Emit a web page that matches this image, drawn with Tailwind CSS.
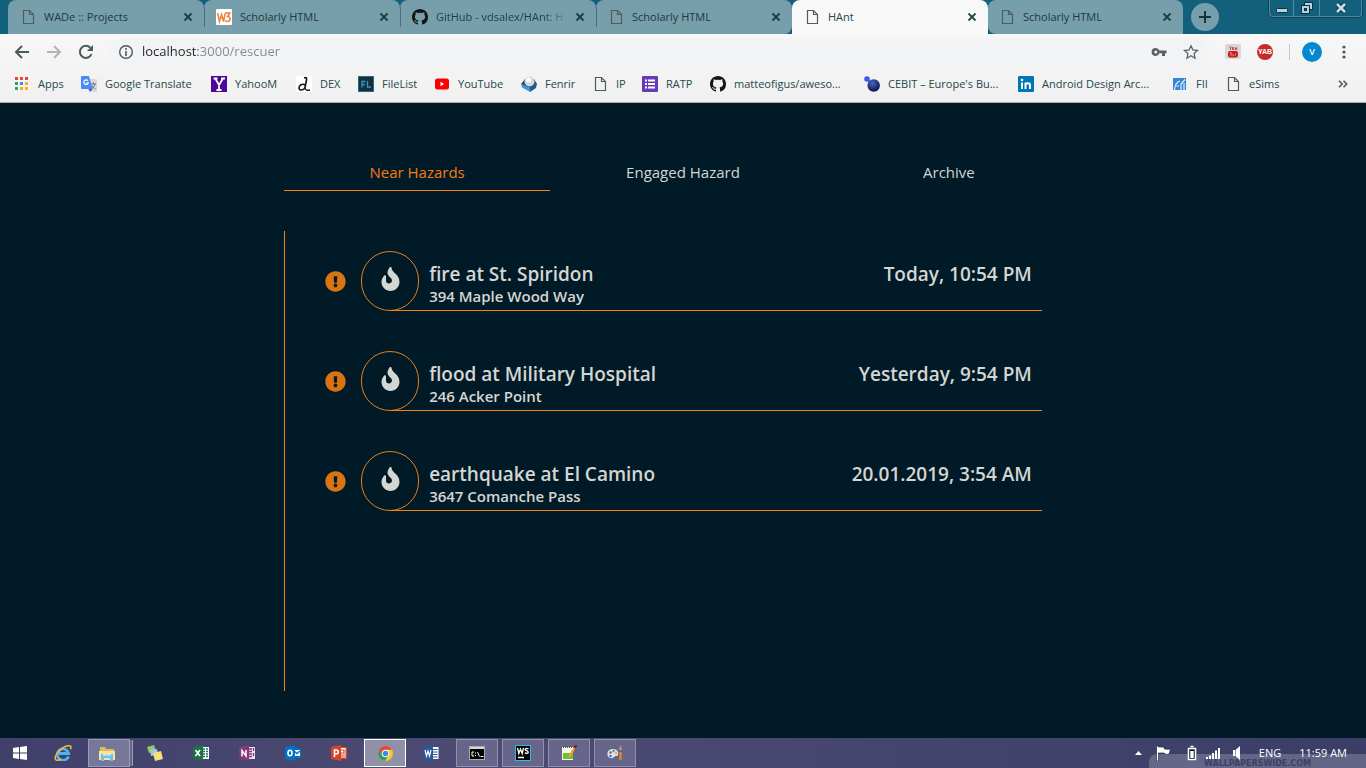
<!DOCTYPE html>
<html lang="en">
<head>
<meta charset="utf-8">
<meta name="viewport" content="width=device-width, initial-scale=1">
<title>HAnt</title>
<script src="https://cdn.jsdelivr.net/npm/@tailwindcss/browser@4"></script>
</head>
<body class="bg-[#011a27]">
<svg class="hidden" aria-hidden="true">
  <symbol id="doc" viewBox="0 0 16 16"><path d="M3.5 1.5h6l4 4v9h-10z M9.5 1.500v4h4" fill="none" stroke="currentColor" stroke-width="1.2"/></symbol>
  <symbol id="close" viewBox="0 0 16 16"><path d="M4.500 4.500l7 7M11.500 4.500l-7 7" stroke="currentColor" stroke-width="1.8" fill="none"/></symbol>
  <symbol id="github" viewBox="0 0 16 16"><path fill="#141414" d="M8 0C3.58 0 0 3.58 0 8c0 3.54 2.29 6.53 5.47 7.59.4.07.55-.17.55-.38 0-.19-.01-.82-.01-1.49-2.01.37-2.53-.49-2.69-.94-.09-.23-.48-.94-.82-1.13-.28-.15-.68-.52-.01-.53.63-.01 1.08.58 1.23.82.72 1.21 1.87.87 2.33.66.07-.52.28-.87.51-1.07-1.78-.2-3.64-.89-3.64-3.95 0-.87.31-1.59.82-2.15-.08-.2-.36-1.02.08-2.12 0 0 .67-.21 2.2.82.64-.18 1.32-.27 2-.27.68 0 1.36.09 2 .27 1.53-1.04 2.2-.82 2.2-.82.44 1.1.16 1.92.08 2.12.51.56.82 1.27.82 2.15 0 3.07-1.87 3.75-3.65 3.95.29.25.54.73.54 1.48 0 1.07-.01 1.930-.01 2.2 0 .21.15.46.55.38A8.013 8.013 0 0016 8c0-4.42-3.58-8-8-8z"/></symbol>
  <symbol id="fire" viewBox="0 0 384 512"><path fill="currentColor" d="M216 23.858c0-23.802-30.653-32.765-44.149-13.038C48 191.851 224 200 224 288c0 35.629-29.114 64.458-64.850 63.994C123.980 351.538 96 322.220 96 287.046v-85.510c0-21.703-26.471-32.225-41.432-16.504C27.801 213.158 0 261.332 0 320c0 105.869 86.131 192 192 192s192-86.131 192-192c0-170.290-168-193.003-168-296.142z"/></symbol>
  <symbol id="alert" viewBox="0 0 512 512"><path fill="currentColor" d="M504 256c0 136.997-111.043 248-248 248S8 392.997 8 256C8 119.083 119.043 8 256 8s248 111.083 248 248zm-248 50c-25.405 0-46 20.595-46 46s20.595 46 46 46 46-20.595 46-46-20.595-46-46-46zm-43.673-165.346l7.418 136c.347 6.364 5.609 11.346 11.982 11.346h48.546c6.373 0 11.635-4.982 11.982-11.346l7.418-136c.375-6.874-5.098-12.654-11.982-12.654h-63.383c-6.884 0-12.356 5.780-11.981 12.654z"/></symbol>
</svg>

<div class="flex min-h-screen flex-col font-['Open_Sans','Noto_Sans',sans-serif]">

  <!-- Browser tab strip -->
  <header class="flex h-[34px] items-stretch bg-[#12607c] pl-2 text-[11px] text-[#1f3a40]">
    <div class="flex w-[196px] items-center rounded-t-lg bg-[#779eab] pr-2 pl-3">
      <button class="flex flex-1 items-center gap-2 whitespace-nowrap"><svg class="size-4 text-[#4f5b5e]"><use href="#doc"/></svg>WADe :: Projects</button>
      <button aria-label="Close tab"><svg class="size-4"><use href="#close"/></svg></button>
    </div>
    <div class="flex w-[196px] items-center rounded-t-lg bg-[#779eab] pr-2">
      <span class="mr-[11px] h-5 w-px bg-[#4a707c]"></span>
      <button class="flex flex-1 items-center gap-2 whitespace-nowrap">
        <svg class="size-4" viewBox="0 0 16 16"><rect width="16" height="16" rx="1" fill="#fff"/><path d="M1.500 4l2 8.500 2-7 2 7L9.300 4M9.500 4h4.500l-2.500 3.500c3.500.2 3.500 5-.2 5-1 0-1.600-.4-2-1" fill="none" stroke="#f0803c" stroke-width="1.500"/></svg>Scholarly HTML</button>
      <button aria-label="Close tab"><svg class="size-4"><use href="#close"/></svg></button>
    </div>
    <div class="flex w-[196px] items-center rounded-t-lg bg-[#779eab] pr-2">
      <span class="mr-[11px] h-5 w-px bg-[#4a707c]"></span>
      <button class="flex min-w-0 flex-1 items-center gap-2"><svg class="size-4 shrink-0"><use href="#github"/></svg><span class="w-[133px] overflow-hidden mask-r-from-80% text-left whitespace-nowrap">GitHub - vdsalex/HAnt: H</span></button>
      <button aria-label="Close tab"><svg class="size-4"><use href="#close"/></svg></button>
    </div>
    <div class="flex w-[196px] items-center rounded-t-lg rounded-br-lg bg-[#779eab] pr-2">
      <span class="mr-[11px] h-5 w-px bg-[#4a707c]"></span>
      <button class="flex flex-1 items-center gap-2 whitespace-nowrap"><svg class="size-4 text-[#4f5b5e]"><use href="#doc"/></svg>Scholarly HTML</button>
      <button aria-label="Close tab"><svg class="size-4"><use href="#close"/></svg></button>
    </div>
    <div class="flex w-[196px] items-center rounded-t-lg bg-[#f8f8f9] pr-2 pl-3 text-[#24484c]">
      <button class="flex flex-1 items-center gap-2 whitespace-nowrap"><svg class="size-4 text-[#4f5b5e]"><use href="#doc"/></svg>HAnt</button>
      <button aria-label="Close tab"><svg class="size-4"><use href="#close"/></svg></button>
    </div>
    <div class="flex w-[195px] items-center rounded-t-lg rounded-bl-lg bg-[#779eab] pr-2 pl-[11px]">
      <button class="flex flex-1 items-center gap-2 whitespace-nowrap"><svg class="size-4 text-[#4f5b5e]"><use href="#doc"/></svg>Scholarly HTML</button>
      <button aria-label="Close tab"><svg class="size-4"><use href="#close"/></svg></button>
    </div>
    <button aria-label="New tab" class="ml-2 flex size-7 items-center justify-center self-center rounded-full bg-[#779eab]">
      <svg class="size-4" viewBox="0 0 16 16"><path d="M8 2v12M2 8h12" stroke="#16323a" stroke-width="2"/></svg>
    </button>
    <div class="mr-1 ml-auto flex h-[17px] divide-x divide-[#4f8ba0] rounded-b border border-t-0 border-[#4f8ba0] shadow-[0_0_0_1px_#0b4259]">
      <button aria-label="Minimize" class="flex w-6 items-center justify-center"><svg class="h-[14px] w-4" viewBox="0 0 16 14"><rect x="2.500" y="7.500" width="11" height="4" rx="1" fill="#b9d1d9" stroke="#0a3443"/></svg></button>
      <button aria-label="Restore" class="flex w-[26px] items-center justify-center"><svg class="size-[14px]" viewBox="0 0 14 14"><rect x="4.500" y="1.500" width="8" height="7" fill="#b9d1d9" stroke="#0a3443"/><rect x="1.500" y="4.500" width="8" height="8" fill="#b9d1d9" stroke="#0a3443"/><rect x="4.500" y="7.500" width="2" height="2" fill="#12607c" stroke="#0a3443"/></svg></button>
      <button aria-label="Close" class="flex w-[41px] items-center justify-center"><svg class="h-3 w-[14px]" viewBox="0 0 14 12"><path d="M3 2l8 8M11 2l-8 8" stroke="#0a3443" stroke-width="4.500"/><path d="M3 2l8 8M11 2l-8 8" stroke="#c9dde4" stroke-width="2.500"/></svg></button>
    </div>
  </header>

  <!-- Toolbar -->
  <div class="bg-linear-to-b from-[#f7f7f7] to-[#f0f0f0]">
    <div class="flex h-9 items-center text-[#4c5b5a]">
      <div class="flex items-center gap-4 pl-3.5">
        <button aria-label="Back"><svg class="size-4" viewBox="0 0 16 16"><path d="M15 8H2.500M8 2L2 8l6 6" fill="none" stroke="currentColor" stroke-width="2"/></svg></button>
        <button aria-label="Forward"><svg class="size-4 text-[#b1b5b5]" viewBox="0 0 16 16"><path d="M1 8h12.500M8 2l6 6-6 6" fill="none" stroke="currentColor" stroke-width="2"/></svg></button>
        <button aria-label="Reload"><svg class="size-4" viewBox="0 0 16 16"><path d="M13.500 10A6 6 0 1 1 12.300 3.800" fill="none" stroke="currentColor" stroke-width="2"/><path d="M15 1v6H9z" fill="currentColor"/></svg></button>
      </div>
      <div class="ml-4 flex h-7 flex-1 items-center rounded-full bg-[#f1f3f5] pr-2.5 pl-2">
        <svg class="size-4" viewBox="0 0 16 16"><circle cx="8" cy="8" r="6.300" fill="none" stroke="currentColor" stroke-width="1.400"/><path d="M8 7v5M8 4v1.700" stroke="currentColor" stroke-width="1.600"/></svg>
        <input aria-label="Address" value="localhost:3000/rescuer" class="ml-2 min-w-0 flex-1 bg-[linear-gradient(90deg,#222_56px,#82888c_56px)] bg-clip-text text-[13px] text-transparent outline-none">
        <button aria-label="Saved passwords" class="mr-4"><svg class="size-4" viewBox="0 0 16 16"><path fill-rule="evenodd" fill="#5d6163" d="M4.800 4a4 4 0 1 0 3.600 5.300H11V12h3V9.300h1.500V6.500H8.400A4 4 0 0 0 4.800 4zm0 2.500a1.500 1.500 0 1 1 0 3 1.500 1.500 0 0 1 0-3z"/></svg></button>
        <button aria-label="Bookmark this page"><svg class="size-4" viewBox="0 0 16 16"><path d="M8 1.800l1.900 4.200 4.600.5-3.400 3.100.9 4.600-4-2.400-4 2.400.9-4.600L1.500 6.500 6.100 6z" fill="none" stroke="#5d6163" stroke-width="1.300"/></svg></button>
      </div>
      <div class="flex items-center pr-3.5 pl-4">
        <button aria-label="YouTube extension"><svg class="size-4" viewBox="0 0 16 16"><rect width="16" height="15" rx="2" fill="#d8d8d8"/><rect x="3" y="7" width="10" height="6.500" rx="2" fill="#c7201f"/><path d="M4.500 2.500l1 1.500 1-1.500M5.500 4v2M7.500 3.500h1.200v2H7.500zM10.500 3.500v2h1.200v-2" stroke="#c7201f" stroke-width=".8" fill="none"/><path d="M5 9h2M6 9v3M8 10v1.500h1M10.500 9.500v2" stroke="#f2b5b0" fill="none" stroke-width=".7"/></svg></button>
        <button aria-label="YAB extension" class="ml-4 size-4 rounded-full bg-[#c92a27] text-center font-['Liberation_Sans',sans-serif] text-[7px] leading-4 font-bold text-white">YAB</button>
        <span class="mr-3 ml-4 h-4 w-px bg-[#c6c8c8]"></span>
        <button aria-label="Profile" class="size-5 rounded-full bg-[#0288d1] text-center text-[9px] leading-5 font-semibold text-white">V</button>
        <button aria-label="Menu" class="ml-[14px]"><svg class="size-4" viewBox="0 0 16 16" fill="#4c5b5a"><circle cx="8" cy="3" r="1.600"/><circle cx="8" cy="8" r="1.600"/><circle cx="8" cy="13" r="1.600"/></svg></button>
      </div>
    </div>

    <!-- Bookmarks -->
    <nav aria-label="Bookmarks" class="flex h-[33px] items-center border-b border-[#a9abab] pr-[15px] pb-1 pl-[14px] text-[11px] whitespace-nowrap text-[#24484c] [&>a]:flex [&>a]:shrink-0 [&>a]:items-center [&>a]:gap-2 [&_svg]:size-4">
      <a href="#" class="w-[67px]"><svg viewBox="0 0 16 16"><path fill="#e8453c" d="M1 1h3v3H1zM6 1h3v3H6zM11 1h3v3h-3z"/><path fill="#35a457" d="M1 6h3v3H1zM1 11h3v3H1z"/><path fill="#4285f4" d="M6 6h3v3H6z"/><path fill="#fbb018" d="M11 6h3v3h-3zM6 11h3v3H6zM11 11h3v3h-3z"/></svg>Apps</a>
      <a href="#" class="w-[130px]"><svg viewBox="0 0 16 16"><path fill="#d5d8dc" d="M6 3h9a1 1 0 0 1 1 1v12h-6z"/><path d="M10 8h5M12.500 6.500V8M14 8c-.5 2-2 4-3.500 5M11 9.500c1 2 2 3 3.500 3.500" stroke="#6a7680" fill="none"/><path fill="#4a8af4" d="M1 0h7l3.500 13H1a1 1 0 0 1-1-1V1a1 1 0 0 1 1-1z"/><path fill="#3454c5" d="M7.500 13h4L9 16z"/><path d="M7 4.800A2.300 2.300 0 1 0 7.300 7H5" fill="none" stroke="#fff" stroke-width="1.200"/></svg>Google Translate</a>
      <a href="#" class="w-[85px]"><svg viewBox="0 0 16 16"><rect width="16" height="16" fill="#4b0797"/><path d="M2.500 2.500h4M10 2.500h4M4.300 2.500L8 9l4-6.500M8 8.500V14M5.500 14h5" stroke="#fff" stroke-width="1.800" fill="none"/></svg>YahooM</a>
      <a href="#" class="w-[62px]"><svg viewBox="0 0 16 16"><rect width="16" height="16" fill="#fff"/><path d="M8 2c2.500-1 3 0 2.500 2L9 11.500c-.4 2.500 2 3 5 2.500M9.300 9C6 7 3 9.500 3 12c0 2.800 4.500 2.600 6-.5" stroke="#111" stroke-width="1.600" fill="none"/></svg>DEX</a>
      <a href="#" class="w-[76px]"><svg viewBox="0 0 16 16"><rect x=".5" y=".5" width="15" height="15" fill="#202c34" stroke="#1b6f91"/><path d="M4 11.500V5.500h3.500M4 8.500h3M9.500 5v6H13" stroke="#1f9fd3" stroke-width="1.300" fill="none"/></svg>FileList</a>
      <a href="#" class="w-[87px]"><svg viewBox="0 0 16 16"><rect x="1" y="2.500" width="14" height="11" rx="2.500" fill="#f00"/><path d="M6.500 5.800v4.400L10.200 8z" fill="#fff"/></svg>YouTube</a>
      <a href="#" class="w-[71px]"><svg viewBox="0 0 16 16"><path d="M0 8l4-5h9l3 5-7 7z" fill="#3b4a5a"/><path d="M0 8l9 3.500V16l-8-4.500z" fill="#3b9bd8"/><path d="M9 11.500L16 7l-1 5-6 4z" fill="#1a5d94"/><circle cx="8.500" cy="5.500" r="5" fill="#d3d8dc"/><circle cx="7.500" cy="4" r="2.500" fill="#fff"/></svg>Fenrir</a>
      <a href="#" class="w-[50px]"><svg class="text-[#4f5b5e]"><use href="#doc"/></svg>IP</a>
      <a href="#" class="w-[68px]"><svg viewBox="0 0 16 16"><rect width="16" height="16" rx="1" fill="#673ab7"/><path d="M3 4.500h2M6 4.500h7M3 8h2M6 8h7M3 11.500h2M6 11.500h7" stroke="#fff" stroke-width="2"/></svg>RATP</a>
      <a href="#" class="w-[154px]"><svg><use href="#github"/></svg>matteofigus/aweso...</a>
      <a href="#" class="w-[154px]"><svg viewBox="0 0 16 16"><defs><radialGradient id="ball" cx=".4" cy=".3" r=".7"><stop offset="0" stop-color="#4b62c4"/><stop offset="1" stop-color="#0a1450"/></radialGradient></defs><circle cx="3" cy="3" r="2.800" fill="#3d5af1"/><path d="M3 3l4 4" stroke="#3d5af1" stroke-width="2"/><circle cx="9.700" cy="9.500" r="6.200" fill="url(#ball)"/></svg>CEBIT – Europe's Bu...</a>
      <a href="#" class="w-[154px]"><svg viewBox="0 0 16 16"><rect width="16" height="16" rx="1" fill="#0077b5"/><path d="M4 6.500V13M7.500 6.500V13M7.500 9.500c0-3 4.500-3 4.500 0V13" stroke="#fff" stroke-width="2" fill="none"/><circle cx="4" cy="4" r="1.300" fill="#fff"/></svg>Android Design Arc...</a>
      <a href="#" class="w-[53px]"><svg viewBox="0 0 16 16"><path fill="#2f86d6" d="M1 2h13v12H1z"/><path d="M2.500 14C3 9 4 6 8 5M4.500 10H7M9 14V8l4-4.500M12 14V7" stroke="#eaf3fb" stroke-width="1.200" fill="none"/></svg>FII</a>
      <a href="#"><svg class="text-[#4f5b5e]"><use href="#doc"/></svg>eSims</a>
      <button aria-label="More bookmarks" class="ml-auto"><svg viewBox="0 0 16 16"><path d="M4 4.800L7.200 8 4 11.200M8.500 4.800L11.700 8l-3.200 3.200" fill="none" stroke="#4c5b5a" stroke-width="1.600"/></svg></button>
    </nav>
  </div>

  <!-- Rescuer page -->
  <main class="flex-1 pt-[52px] text-[#d4d6d2]">
    <div class="mx-auto w-[58.4%]">
      <div role="tablist" class="grid grid-cols-3 text-[15px] leading-5">
        <button role="tab" aria-selected="true" class="border-b border-[#f78410] pt-[7px] pb-2 text-[#f57c10]">Near Hazards</button>
        <button role="tab" aria-selected="false" class="border-b border-transparent pt-[7px] pb-2">Engaged Hazard</button>
        <button role="tab" aria-selected="false" class="border-b border-transparent pt-[7px] pb-2">Archive</button>
      </div>
      <ul class="mt-10 flex min-h-[460px] flex-col gap-10 border-l border-l-[#f78410] px-10 pt-5 font-semibold">
        <li class="flex h-[60px] items-center">
          <svg class="size-[21px] text-[#da7412]"><use href="#alert"/></svg>
          <span class="ml-[15px] flex h-[60px] w-[58px] items-center justify-center rounded-full border border-[#e97f18] pb-1"><svg class="h-6 w-[19px]"><use href="#fire"/></svg></span>
          <div class="-ml-[29px] flex h-full flex-1 justify-between border-b border-[#f78410] pt-[11px] pr-[10px] pl-[39px]">
            <div><h2 class="text-[19px] leading-6">fire at St. Spiridon</h2><p class="text-[15px] leading-5">394 Maple Wood Way</p></div>
            <time class="text-[19px] leading-6">Today, 10:54 PM</time>
          </div>
        </li>
        <li class="flex h-[60px] items-center">
          <svg class="size-[21px] text-[#da7412]"><use href="#alert"/></svg>
          <span class="ml-[15px] flex h-[60px] w-[58px] items-center justify-center rounded-full border border-[#e97f18] pb-1"><svg class="h-6 w-[19px]"><use href="#fire"/></svg></span>
          <div class="-ml-[29px] flex h-full flex-1 justify-between border-b border-[#f78410] pt-[11px] pr-[10px] pl-[39px]">
            <div><h2 class="text-[19px] leading-6">flood at Military Hospital</h2><p class="text-[15px] leading-5">246 Acker Point</p></div>
            <time class="text-[19px] leading-6">Yesterday, 9:54 PM</time>
          </div>
        </li>
        <li class="flex h-[60px] items-center">
          <svg class="size-[21px] text-[#da7412]"><use href="#alert"/></svg>
          <span class="ml-[15px] flex h-[60px] w-[58px] items-center justify-center rounded-full border border-[#e97f18] pb-1"><svg class="h-6 w-[19px]"><use href="#fire"/></svg></span>
          <div class="-ml-[29px] flex h-full flex-1 justify-between border-b border-[#f78410] pt-[11px] pr-[10px] pl-[39px]">
            <div><h2 class="text-[19px] leading-6">earthquake at El Camino</h2><p class="text-[15px] leading-5">3647 Comanche Pass</p></div>
            <time class="text-[19px] leading-6">20.01.2019, 3:54 AM</time>
          </div>
        </li>
      </ul>
    </div>
  </main>

  <!-- Taskbar -->
  <footer class="relative flex h-[30px] items-stretch bg-linear-to-r from-[#40406a] via-[#4d4b74] via-35% to-[#3a3e66] py-px text-[11px] leading-3 text-white [&>button]:mx-0.5 [&>button]:flex [&>button]:w-[42px] [&>button]:items-center [&>button]:justify-center [&>button:first-child]:w-9">
    <button aria-label="Start"><svg class="h-[14px] w-[14px]" viewBox="0 0 14 14"><path fill="#fff" d="M0 2l6-1v5.500H0zM7 1l7-1v6.500H7zM0 7.500h6V13l-6-1zM7 7.500h7V14l-7-1z"/></svg></button>
    <button aria-label="Internet Explorer"><svg class="h-4 w-[18px]" viewBox="0 0 18 16"><path d="M14.500 11.500A5.700 5.700 0 1 1 14.700 8.500H5" fill="none" stroke="#4fb5ee" stroke-width="2.800"/><path d="M2 15C-1 12 6 2 14 .8c3-.4 3.500 1 2.500 3.500M2 15c1.500 1 3.500-.2 5-1.200" fill="none" stroke="#f2bd2c" stroke-width="1.500"/></svg></button>
    <button aria-label="File Explorer" class="border border-[#9a9bb4] bg-[#777899] shadow-[3px_0_0_-1px_#66678b,4px_0_0_-1px_#9a9bb4]"><svg class="mr-1 h-[15px] w-4" viewBox="0 0 16 15"><path fill="#e2bd55" d="M1 1h5l1 2h8v10H1z"/><path fill="#f8e39a" d="M0 5h16v9H0z"/><path fill="#72c3ea" d="M2 8h12v7h-3v-3H5v3H2z"/><path fill="#c8e9f8" d="M4 8h8v1.500H4z"/></svg></button>
    <button aria-label="Sticky Notes"><svg class="size-4" viewBox="0 0 16 16"><path fill="#8fc96c" d="M0 2l7-2 2 6-7 2z"/><path fill="#9cc9e8" d="M3 5l7-1 1 6-7 1z"/><path fill="#f7e27a" d="M6 8l8-2 2 8-8 2z"/></svg></button>
    <button aria-label="Excel"><svg class="size-4" viewBox="0 0 16 16"><path fill="#fff" d="M8 2h8v12H8z"/><path d="M10 4h2M13 4h2M10 6.500h2M13 6.500h2M10 9h2M13 9h2M10 11.500h2M13 11.500h2" stroke="#1e7145" stroke-width="1.500"/><path fill="#1e7145" d="M0 2l10-2v16L0 14z"/><path d="M2.500 5l4.500 6M7 5l-4.500 6" stroke="#fff" stroke-width="1.600"/></svg></button>
    <button aria-label="OneNote"><svg class="size-4" viewBox="0 0 16 16"><path fill="#f1dff0" d="M8 2h8v12H8z"/><path d="M10 4h3M10 6.500h3M10 9h3M10 11.500h3M14.500 3v3M14.500 8v3" stroke="#80397b" stroke-width="1.300"/><path fill="#80397b" d="M0 2l10-2v16L0 14z"/><path d="M3 11.500v-6l4 5.500V5" stroke="#fff" stroke-width="1.500" fill="none"/></svg></button>
    <button aria-label="Outlook"><svg class="size-4" viewBox="0 0 16 16"><path fill="#0072c6" d="M9 3h7v10H9z"/><path fill="#fff" d="M9 5h6v6H9z"/><path d="M9 6l3 2.500L15 6" stroke="#0072c6" stroke-width="1.500" fill="none"/><path fill="#0072c6" d="M0 2l10-2v16L0 14z"/><ellipse cx="5" cy="8" rx="2" ry="2.700" stroke="#fff" stroke-width="1.600" fill="none"/></svg></button>
    <button aria-label="PowerPoint"><svg class="size-4" viewBox="0 0 16 16"><path fill="#d24726" d="M8 2h8v12H8z"/><path fill="#fff" d="M9 3h5.500v10H9z"/><path d="M10 5h3v3h-3M10 10h4M10 12h4" stroke="#d24726" stroke-width="1.200" fill="none"/><path fill="#d24726" d="M0 2l10-2v16L0 14z"/><path d="M3.500 12V5H5c3 0 3 4 0 4H3.500" stroke="#fff" stroke-width="1.600" fill="none"/></svg></button>
    <button aria-label="Chrome" class="border border-white bg-[#9190a9]"><svg class="size-[15px]" viewBox="0 0 16 16"><circle cx="8" cy="8" r="8" fill="#f8c928"/><path fill="#e0463a" d="M1.100 4A8 8 0 0 1 14.900 4H8L4.500 10z"/><path fill="#2ca05a" d="M1.100 4A8 8 0 0 0 7.500 16L11 10H4.500z"/><circle cx="8" cy="8" r="4" fill="#fff"/><circle cx="8" cy="8" r="3" fill="#4285f4"/></svg></button>
    <button aria-label="Word"><svg class="size-4" viewBox="0 0 16 16"><path fill="#fff" d="M8 2h7.500v12H8z"/><path d="M10 4.500h4.500M10 7h4.500M10 9.500h4.500M10 12h4.500" stroke="#2b579a" stroke-width="1.200"/><path fill="#2b579a" d="M0 2l10-2v16L0 14z"/><path d="M2 5l1.500 6L5 6l1.500 5L8 5" stroke="#fff" stroke-width="1.200" fill="none"/></svg></button>
    <button aria-label="Command Prompt" class="border border-[#9190ad] bg-[#67668a]"><svg class="h-[14px] w-4" viewBox="0 0 16 14"><rect x=".5" y=".5" width="15" height="13" fill="#000" stroke="#aaa"/><path fill="#d8d8d8" d="M1 1h14v2H1z"/><path d="M5 6H3v4h2M6.500 6.500v1M6.500 9v1M8.500 6l2 4.500M11.500 10.500h3" stroke="#fff" fill="none"/></svg></button>
    <button aria-label="WebStorm" class="border border-[#9190ad] bg-[#67668a]"><svg class="size-4" viewBox="0 0 16 16"><rect x=".5" y=".5" width="15" height="15" fill="#000" stroke="#1fc4e8"/><path d="M2.500 3l1.300 5.500L5.500 4l1.700 4.500L8.500 3M13.500 4c-3-1.500-4.500.8-2 1.700 3 1 2 3.600-1.700 2.100M3 12.500h6" stroke="#fff" stroke-width="1.300" fill="none"/></svg></button>
    <button aria-label="Notepad++" class="border border-[#9190ad] bg-[#67668a]"><svg class="size-4" viewBox="0 0 16 16"><path fill="#f4f4ec" d="M1 2h11v13H1z"/><path fill="#6fbf2f" d="M2 8h10v6H2z"/><path d="M2 2h9" stroke="#555" stroke-width="2" stroke-dasharray="1 1"/><path d="M14 2L8 12" stroke="#e9a822" stroke-width="2.200"/><path d="M15.500 0L13.500 3" stroke="#8d1c1c" stroke-width="2.500"/></svg></button>
    <button aria-label="Paint" class="border border-[#9190ad] bg-[#67668a]"><svg class="size-4" viewBox="0 0 16 16"><path fill="#cfe6f4" d="M6 4c4 0 6 3 5 6-1 2-3 0-4 2s-6 1.500-6.500-2S2 4 6 4z"/><circle cx="3.500" cy="7.500" r="1.200" fill="#d9442f"/><circle cx="6.500" cy="6" r="1.200" fill="#3ea34a"/><circle cx="9" cy="8" r="1.200" fill="#f0b429"/><circle cx="3.500" cy="11" r="1.200" fill="#2f6fd0"/><path d="M13.500 7v8" stroke="#e28a2b" stroke-width="2.200"/><path d="M13.500 0l1.500 5h-3z" fill="#c9a06b"/></svg></button>
    <div class="absolute right-0 bottom-0 h-[14px] w-[217px] overflow-hidden rounded-tl-lg bg-white/20 pt-1.5 text-center font-['DejaVu_Sans',sans-serif] text-[8px] leading-2 font-bold text-[#3c4069]">WALLPAPERSWIDE.COM</div>
    <div class="relative ml-auto flex items-center pr-[19px]">
      <svg class="h-1 w-[7px]" viewBox="0 0 7 4"><path fill="#fff" d="M0 4l3.500-4L7 4z"/></svg>
      <svg class="ml-[14px] h-4 w-[15px]" viewBox="0 0 15 16"><path fill="#fff" stroke="#15182f" stroke-width=".6" d="M.5 1h2v1H8v1.500c2 1 4 1 6.500.5L13 9c-2 .8-4 .3-5-1H2.500v8h-2z"/></svg>
      <svg class="ml-4 h-4 w-2.5" viewBox="0 0 10 16"><path d="M3.500 1.500h3M1.500 3.500h7v11h-7z" fill="#15182f" stroke="#fff" stroke-width="1.500"/><path fill="#fff" d="M3.300 6h3.400v7H3.300z"/></svg>
      <svg class="ml-2 h-[13px] w-4" viewBox="0 0 16 13"><path fill="#fff" d="M1 10h2v2H1zM4 8.500h2V12H4zM7 6h2v6H7zM10 3.500h2V12h-2zM13 1h2v11h-2z"/></svg>
      <svg class="ml-3 h-[14px] w-2" viewBox="0 0 8 14"><path fill="#fff" d="M0 4h2v6H0zM2.500 4L7 0v14l-4.500-4z"/></svg>
      <span class="ml-[18px]">ENG</span>
      <time class="ml-[18px]">11:59 AM</time>
    </div>
  </footer>
</div>
</body>
</html>
